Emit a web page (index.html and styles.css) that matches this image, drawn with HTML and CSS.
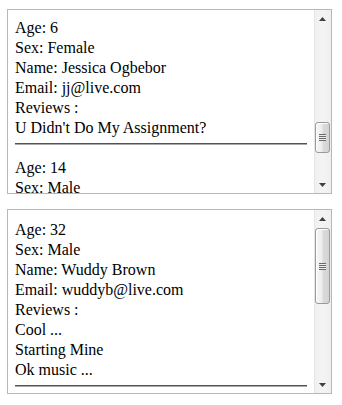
FILE: index.html
```html
<!DOCTYPE html>
<html>
<head>
<meta charset="utf-8">
<title>Reviews</title>
<link rel="stylesheet" href="styles.css">
</head>
<body>
<div class="page">
  <div class="box">
    <div class="view view-scrolled">
      <div class="entry">
        <div class="line">Age: 6</div>
        <div class="line">Sex: Female</div>
        <div class="line">Name: Jessica Ogbebor</div>
        <div class="line">Email: jj@live.com</div>
        <div class="line">Reviews :</div>
        <div class="line">U Didn't Do My Assignment?</div>
        <hr class="sep">
      </div>
      <div class="entry">
        <div class="line">Age: 14</div>
        <div class="line">Sex: Male</div>
      </div>
    </div>
    <div class="scrollbar">
      <div class="sb-btn">
        <svg width="7" height="4" viewBox="0 0 7 4"><polygon points="3.5,0 7,4 0,4" fill="#404040"/></svg>
      </div>
      <div class="sb-track">
        <div class="thumb thumb-mid"><span class="grip"></span></div>
      </div>
      <div class="sb-btn">
        <svg width="7" height="4" viewBox="0 0 7 4"><polygon points="0,0 7,0 3.5,4" fill="#404040"/></svg>
      </div>
    </div>
  </div>
  <div class="box">
    <div class="view">
      <div class="entry">
        <div class="line">Age: 32</div>
        <div class="line">Sex: Male</div>
        <div class="line">Name: Wuddy Brown</div>
        <div class="line">Email: wuddyb@live.com</div>
        <div class="line">Reviews :</div>
        <div class="line">Cool ...</div>
        <div class="line">Starting Mine</div>
        <div class="line">Ok music ...</div>
        <hr class="sep">
      </div>
    </div>
    <div class="scrollbar">
      <div class="sb-btn">
        <svg width="7" height="4" viewBox="0 0 7 4"><polygon points="3.5,0 7,4 0,4" fill="#404040"/></svg>
      </div>
      <div class="sb-track">
        <div class="thumb thumb-top"><span class="grip"></span></div>
      </div>
      <div class="sb-btn">
        <svg width="7" height="4" viewBox="0 0 7 4"><polygon points="0,0 7,0 3.5,4" fill="#404040"/></svg>
      </div>
    </div>
  </div>
</div>
</body>
</html>
```

FILE: styles.css
```css
html, body {
  margin: 0;
  padding: 0;
  background: #ffffff;
}

.page {
  display: flex;
  flex-direction: column;
  gap: 15px;
  padding: 9px 0 0 7px;
}

.box {
  box-sizing: border-box;
  display: flex;
  width: 325px;
  height: 185px;
  border: 1px solid #a3bbdd;
}

.view {
  flex: 1;
  min-width: 0;
  overflow: hidden;
  padding: 10px 7px 0 7px;
  font-family: "Liberation Serif", "Times New Roman", serif;
  font-size: 16px;
  line-height: 20px;
  color: #000000;
}

.view-scrolled {
  padding-top: 8px;
}

.line {
  white-space: nowrap;
}

.sep {
  height: 0;
  margin: 5px 0 13px 0;
  border: 0;
  border-top: 1px solid #535353;
  border-bottom: 1px solid #a8a8a8;
}

.scrollbar {
  width: 17px;
  flex: none;
  display: flex;
  flex-direction: column;
  background: linear-gradient(to right, #e6e6e6 0, #e6e6e6 1px, #f0f0f0 1px, #f4f4f4 50%, #efefef 100%);
}

.sb-btn {
  height: 17px;
  flex: none;
  display: flex;
  align-items: center;
  justify-content: center;
}

.sb-btn svg {
  display: block;
}

.sb-track {
  flex: 1;
  display: flex;
  flex-direction: column;
}

.thumb {
  box-sizing: border-box;
  margin: 0 1px;
  border: 1px solid #9a9a9a;
  border-radius: 3px;
  background: linear-gradient(to right, #f6f6f6 0%, #ededed 45%, #dadada 55%, #d3d3d3 100%);
  box-shadow: inset 1px 1px 0 #ffffff;
  display: flex;
  align-items: center;
  justify-content: center;
}

.thumb-mid {
  margin-top: 95px;
  height: 31px;
}

.thumb-top {
  margin-top: 1px;
  height: 76px;
}

.grip {
  display: block;
  width: 7px;
  height: 7px;
  background: repeating-linear-gradient(to bottom, #6a6a6a 0, #6a6a6a 1px, #ececec 1px, #ececec 2px);
}
```
